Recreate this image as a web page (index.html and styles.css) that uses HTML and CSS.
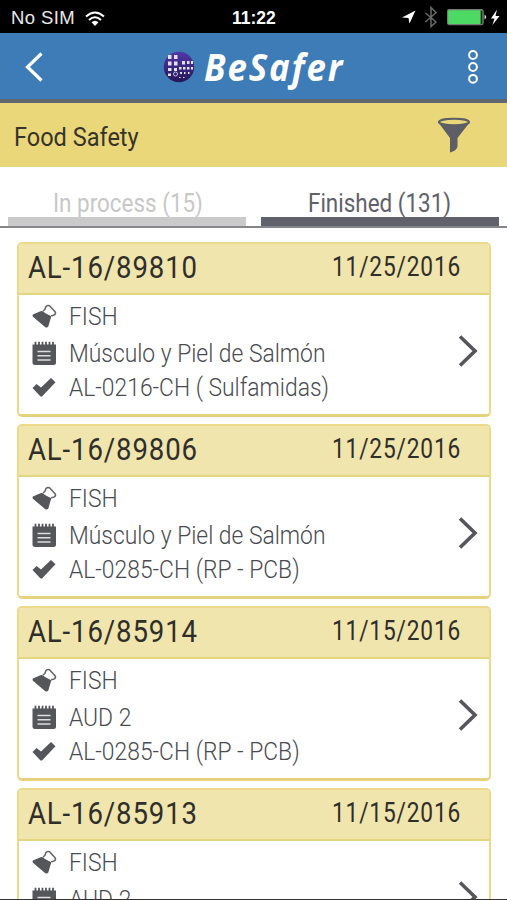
FILE: index.html
```html
<!DOCTYPE html>
<html lang="en">
<head>
<meta charset="utf-8">
<title>BeSafer</title>
<link rel="stylesheet" href="styles.css">
</head>
<body>
<svg class="defs" width="0" height="0" aria-hidden="true">
  <symbol id="flask" viewBox="0 0 26 26"><path d="M1.500 12.500Q1.500 11.300 3 11L9.500 8.200Q12 7.500 14 10L20.300 13.200 17.300 23.500Q16 25.300 14 24L2.500 14.200Q1.500 13.500 1.500 12.500Z" fill="#55565a"/><path d="M12 8 13.800 6.500 15 3.500Q16.500 2 18.500 2.800L24.300 9Q25 11.500 22.500 12.300L20 12.800" fill="none" stroke="#66676a" stroke-width="1.600" stroke-linejoin="round"/></symbol>
  <symbol id="note" viewBox="0 0 26 26"><path d="M1.500 4.500H25V22.500Q25 25 22.500 25H4Q1.500 25 1.500 22.500Z" fill="#55565a"/><path d="M4.500 1.800V6M8 1.800V6M11.500 1.800V6M15 1.800V6M18.500 1.800V6M22 1.800V6" stroke="#55565a" stroke-width="1.800"/><path d="M6.500 11.500H19.500M6.500 15.800H19.500M6.500 20H19.500" stroke="#ddd" stroke-width="1.400"/></symbol>
  <symbol id="check" viewBox="0 0 26 26"><path d="M1.500 14 5.500 10 10 13.500 20 4 24.500 8.200 11 22.500H9.500Z" fill="#55565a"/></symbol>
  <symbol id="next" viewBox="0 0 20 34"><path d="M2 2.500 17 17 2 31.500" fill="none" stroke="#55565a" stroke-width="3.600"/></symbol>
</svg>
<div class="screen">
  <div class="status">
    <span class="carrier">No SIM</span>
    <svg class="wifi" viewBox="0 0 20 15"><path d="M1 5.500Q10-2.500 19 5.500M4 9Q10 3.500 16 9" fill="none" stroke="#fff" stroke-width="2"/><path d="M6.500 11.300Q10 8 13.500 11.300L10 15Z" fill="#fff"/></svg>
    <span class="clock">11:22</span>
    <svg class="indicators" viewBox="0 0 100 24"><path d="M0 11.500 13.500 4.500 7.500 17.500 6.500 12Z" fill="#fff"/><path d="M23.500 7 34 16 29 20.500V1.500L34 6.500 23.500 16" fill="none" stroke="#69696b" stroke-width="1.500"/><rect x="45.600" y="3.600" width="35.500" height="15" rx="1.500" fill="#4cd964" stroke="#777" stroke-width="1.200"/><path d="M79.500 4.500V18" stroke="#1c3020" stroke-width="1.800"/><path d="M82.500 8.500Q86 11 82.500 13.500Z" fill="#ddd"/><path d="M95 3.500 89 12.500H92.500L90.500 19 97.500 10H93.500Z" fill="#fff"/></svg>
  </div>
  <header class="bar">
    <svg class="back" viewBox="0 0 20 30"><path d="M17.500 1.500 3.500 15 17.500 28.500" fill="none" stroke="#fff" stroke-width="3.200"/></svg>
    <div class="brand">
      <svg class="globe" viewBox="0 0 32 32"><defs><linearGradient id="g" x1="0" y1="0" x2="0" y2="1"><stop offset="0" stop-color="#5038a8"/><stop offset="1" stop-color="#25165a"/></linearGradient></defs><circle cx="16" cy="16" r="15.200" fill="url(#g)"/><g fill="#e6e0f4"><path d="M5 4h3.500v4H5zM11 4h3.500v4H11zM5 10.500h3.500v4H5zM11 10.500h3.500v4H11zM5 17h3.500v3H5zM11 17h3v3h-3zM5 22.500h3v2.500H5z"/><path d="M19 10h3v3.500h-3zM24 10h2.500v3H24zM28 10h2v3h-2zM16 16h2.500v2.500H16zM20 16h2.500v2.500H20zM24 16h2.500v2.500H24zM28 16h2v2.500h-2zM17 21h2v2h-2zM21 21h1.500v2H21zM25 21h1.500v2H25zM16 26h1.500v1H16zM20 26h1.500v1H20z"/></g><circle cx="12.500" cy="23" r="2" fill="none" stroke="#c6bce0"/></svg>
      <span class="name">BeSafer</span>
    </div>
    <svg class="more" viewBox="0 0 12 36"><g fill="none" stroke="#fff" stroke-width="2"><circle cx="6" cy="6" r="3.900"/><circle cx="6" cy="18" r="3.900"/><circle cx="6" cy="29.800" r="3.900"/></g></svg>
  </header>
  <div class="section">
    <h1><span class="cond">Food Safety</span></h1>
    <svg class="filter" viewBox="0 0 34 36"><path d="M1 5 13 21V35.500Q19 34 20.500 30V21L33 5Z" fill="#5d5e66"/><ellipse cx="17" cy="5" rx="15" ry="3.300" fill="#ead77a" stroke="#5d5e66" stroke-width="2"/></svg>
  </div>
  <nav class="tabs">
    <a class="tab"><span class="cond">In process (15)</span></a>
    <a class="tab active"><span class="cond">Finished (131)</span></a>
  </nav>
  <main class="list">
    <article class="card">
      <div class="head"><span class="code">AL-16/89810</span><span class="date">11/25/2016</span></div>
      <div class="body"><ul>
        <li><svg><use href="#flask"/></svg><span>FISH</span></li>
        <li><svg><use href="#note"/></svg><span>Músculo y Piel de Salmón</span></li>
        <li><svg><use href="#check"/></svg><span>AL-0216-CH ( Sulfamidas)</span></li>
      </ul><svg class="next"><use href="#next"/></svg></div>
    </article>
    <article class="card">
      <div class="head"><span class="code">AL-16/89806</span><span class="date">11/25/2016</span></div>
      <div class="body"><ul>
        <li><svg><use href="#flask"/></svg><span>FISH</span></li>
        <li><svg><use href="#note"/></svg><span>Músculo y Piel de Salmón</span></li>
        <li><svg><use href="#check"/></svg><span>AL-0285-CH (RP - PCB)</span></li>
      </ul><svg class="next"><use href="#next"/></svg></div>
    </article>
    <article class="card">
      <div class="head"><span class="code">AL-16/85914</span><span class="date">11/15/2016</span></div>
      <div class="body"><ul>
        <li><svg><use href="#flask"/></svg><span>FISH</span></li>
        <li><svg><use href="#note"/></svg><span>AUD 2</span></li>
        <li><svg><use href="#check"/></svg><span>AL-0285-CH (RP - PCB)</span></li>
      </ul><svg class="next"><use href="#next"/></svg></div>
    </article>
    <article class="card">
      <div class="head"><span class="code">AL-16/85913</span><span class="date">11/15/2016</span></div>
      <div class="body"><ul>
        <li><svg><use href="#flask"/></svg><span>FISH</span></li>
        <li><svg><use href="#note"/></svg><span>AUD 2</span></li>
      </ul><svg class="next"><use href="#next"/></svg></div>
    </article>
  </main>
</div>
</body>
</html>
```
FILE: styles.css
```css
* { box-sizing: border-box; }
body { margin: 0; background: #fff; font-family: Roboto, sans-serif; }
svg { display: block; flex: none; }
.defs { position: absolute; }
.screen { width: 507px; height: 900px; overflow: hidden; border-bottom: 1px solid #333; }
.status { height: 33px; background: #000; color: #fff; display: grid; grid-template-columns: 74px 147px 1fr 100px; align-items: center; padding: 3px 5px 0 11px; font: 18.500px/30px "Liberation Sans", sans-serif; }
.carrier { white-space: nowrap; color: #e8e8e8; letter-spacing: .4px; }
.wifi { width: 20px; height: 15px; justify-self: start; }
.clock { font-weight: 700; font-size: 17.500px; }
.indicators { width: 100px; height: 24px; }
.bar { height: 70px; background: #3d7cb7; border-bottom: 4px solid #63656f; display: grid; grid-template-columns: 139px 1fr 12px; align-items: center; padding: 2px 28px 0 24px; }
.back { width: 20px; height: 30px; }
.brand { display: flex; align-items: center; }
.globe { width: 32px; height: 32px; }
.name { color: #fff; font: italic 700 37px/50px "Open Sans", sans-serif; letter-spacing: 2px; margin: -1px 0 0 9px; transform: scaleX(.94); transform-origin: left; }
.more { width: 12px; height: 36px; }
.section { height: 64px; background: #ead77a; display: flex; align-items: center; justify-content: space-between; padding: 3px 36px 0 14px; }
h1 { margin: 0; font-size: 26px; line-height: 36px; font-weight: 400; color: #37332a; }
.cond { display: inline-block; white-space: nowrap; transform: scaleX(.88); transform-origin: left; }
h1 .cond { transform: scaleX(.905); }
.filter { width: 34px; height: 36px; margin-top: -4px; }
.tabs { height: 61px; display: grid; grid-template-columns: 238px 238px; column-gap: 15px; padding: 0 8px; border-bottom: 2px solid #85868a; }
.tab { height: 59px; border-bottom: 9px solid #cacaca; color: #c8c8c8; font-size: 25.500px; line-height: 30px; padding: 21px 0 0 45px; }
.tab.active { border-color: #5f616b; color: #5f616b; padding-left: 47px; }
.list { padding: 14px 16px 0 17px; display: grid; row-gap: 7px; }
.card { height: 175px; border: 2px solid #ecd98a; border-bottom: 3px solid #e6d27c; border-radius: 5px; }
.head { height: 51px; background: #f0e5ac; border-bottom: 2px solid #e4d57f; display: grid; grid-template-columns: 304px 1fr; padding-left: 9px; color: #302e2b; line-height: 47px; }
.code, .date { transform: scaleX(.875); transform-origin: left; white-space: nowrap; }
.code { font-size: 31.500px; letter-spacing: 1px; }
.date { font-size: 27px; letter-spacing: 1px; line-height: 46px; transform: scaleX(.84); }
.body { display: flex; justify-content: space-between; padding: 2px 11px 0 12px; }
ul { list-style: none; margin: 0; padding: 0; display: grid; grid-template-rows: 38px 36px 32px; }
li { display: flex; align-items: center; gap: 12px; color: #4a4b50; font-size: 26.500px; line-height: 30px; font-weight: 330; }
li svg { width: 26px; height: 26px; }
li span { transform: scaleX(.862); transform-origin: left; white-space: nowrap; }
.next { width: 20px; height: 34px; margin-top: 37px; }
```
